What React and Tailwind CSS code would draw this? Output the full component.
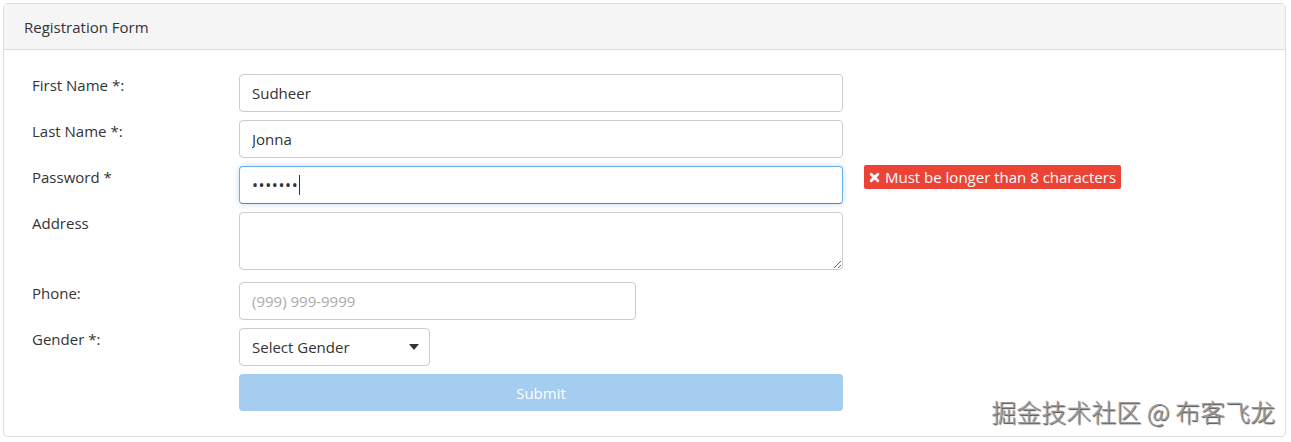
import { useState } from 'react';

const Label = ({ children }) => (
  <label className="pt-[1px] text-[15px] leading-[20px] text-[#333]">{children}</label>
);

const inputCls =
  'h-[38px] rounded-[4px] border border-[#ccc] bg-white px-[12px] text-[15px] text-[#333] outline-none';

const App = () => {
  const [first, setFirst] = useState('Sudheer');
  const [last, setLast] = useState('Jonna');

  return (
    <div className="h-[442px] w-[1291px] bg-white p-[3px] font-['Open_Sans',sans-serif]">
      <div className="relative h-[434px] w-[1283px] rounded-[4px] border border-[#ddd]">
        {/* Header */}
        <div className="flex h-[46px] items-center border-b border-[#ddd] bg-[#f5f5f5] px-[20px] pt-[1px] text-[15px] text-[#333]">
          Registration Form
        </div>

        {/* Body */}
        <div className="grid grid-cols-[207px_604px_1fr] gap-y-[8px] pl-[28px] pt-[24px]">
          <Label>First Name *:</Label>
          <input className={inputCls} value={first} onChange={(e) => setFirst(e.target.value)} />
          <div />

          <Label>Last Name *:</Label>
          <input className={inputCls} value={last} onChange={(e) => setLast(e.target.value)} />
          <div />

          <Label>Password *</Label>
          <div className="flex h-[38px] items-center rounded-[4px] border border-[#66afe9] border-b-[#d9534f] bg-white px-[12px] shadow-[0_0_6px_rgba(102,175,233,0.4)]">
            <span className="text-[16px] tracking-[0.6px] text-[#333]">•••••••</span>
            <span className="ml-[1px] h-[20px] w-px bg-[#333]" />
          </div>
          <div className="flex items-start pl-[21px]">
            <span className="mt-[-1px] flex h-[24px] items-center gap-[5px] rounded-[2px] bg-[#eb4436] px-[5px] text-[15px] text-white">
              <svg width="11" height="11" viewBox="0 0 10 10">
                <path d="M2 2 L8 8 M8 2 L2 8" stroke="white" strokeWidth="2.6" strokeLinecap="round" />
              </svg>
              Must be longer than 8 characters
            </span>
          </div>

          <Label>Address</Label>
          <textarea className="h-[58px] resize-y rounded-[4px] border border-[#ccc] bg-white px-[12px] py-[6px] text-[15px] outline-none" />
          <div />

          <div className="pt-[3px]">
            <Label>Phone:</Label>
          </div>
          <div className="mt-[4px]">
            <input className={`${inputCls} w-[397px] placeholder:text-[#aaa]`} placeholder="(999) 999-9999" />
          </div>
          <div />

          <Label>Gender *:</Label>
          <div className="flex h-[38px] w-[191px] items-center justify-between rounded-[4px] border border-[#ccc] bg-white pl-[12px] pr-[10px] text-[15px] text-[#333]">
            <span>Select Gender</span>
            <svg width="10" height="6" viewBox="0 0 10 6">
              <path d="M0 0 L10 0 L5 6 Z" fill="#333" />
            </svg>
          </div>
          <div />

          <div />
          <button className="h-[37px] rounded-[4px] bg-[#a5cdf0] pt-[1px] text-[15px] text-white">Submit</button>
          <div />
        </div>

        {/* Watermark */}
        <div className="absolute bottom-[10px] right-[10px] font-['Noto_Sans_CJK_SC',sans-serif] text-[25px] font-light leading-[30px] text-[#9a9a9a] [text-shadow:1px_1px_1px_#444]">
          掘金技术社区 @ 布客飞龙
        </div>
      </div>
    </div>
  );
};

export default App;
